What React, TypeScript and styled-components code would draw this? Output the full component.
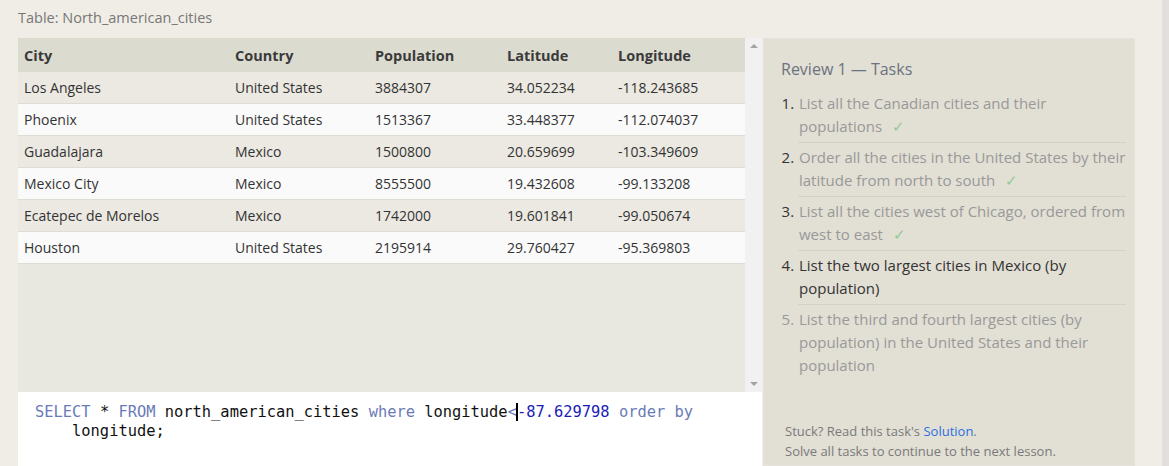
import styled, { createGlobalStyle } from 'styled-components';

const GlobalStyle = createGlobalStyle`
  html, body {
    margin: 0;
    padding: 0;
    background: #f0ede6;
    overflow: hidden;
  }
  body {
    font-family: "Open Sans", "Noto Sans", sans-serif;
  }
`;

const Screen = styled.div`
  display: flex;
  height: 466px;
  overflow: hidden;
`;
const Content = styled.div`
  flex: 1;
  display: flex;
  flex-direction: column;
  padding-left: 18px;
`;
const PageScroll = styled.div`
  width: 7px;
  background: #e3dfdc;
`;
const TableTitle = styled.div`
  height: 38px;
  line-height: 36px;
  font-size: 14.5px;
  color: #777;
`;
const Workspace = styled.div`
  flex: 1;
  display: flex;
  gap: 1px;
  min-height: 0;
`;
const LeftColumn = styled.div`
  width: 744px;
  display: flex;
  flex-direction: column;
`;
const TableArea = styled.div`
  height: 354px;
  display: flex;
  background: #e9e8e0;
`;
const TableWrap = styled.div`
  flex: 1;
`;
const Table = styled.table`
  width: 100%;
  border-collapse: collapse;
  table-layout: fixed;
  font-size: 14px;
  color: #333;
`;
const HeadCell = styled.th<{ $w: number }>`
  width: ${(p) => p.$w - 12}px;
  height: 34px;
  padding: 0 6px;
  text-align: left;
  font-weight: 700;
  font-size: 14.5px;
  color: #3a3a3a;
  background: #dcdbd0;
`;
const Row = styled.tr<{ $odd: boolean }>`
  background: ${(p) => (p.$odd ? '#ebe9e2' : '#fafafa')};
  border-bottom: 1px solid #dedcd4;
`;
const Cell = styled.td`
  height: 31px;
  padding: 0 6px;
  white-space: nowrap;
`;
const FakeScrollbar = styled.div`
  width: 17px;
  background: #f1f1f1;
  display: flex;
  flex-direction: column;
  justify-content: space-between;
  align-items: center;
  padding: 6px 0;
  box-sizing: border-box;
`;
const Arrow = styled.div<{ $up?: boolean }>`
  width: 0;
  height: 0;
  border-left: 4px solid transparent;
  border-right: 4px solid transparent;
  ${(p) =>
    p.$up ? 'border-bottom: 4px solid #a3a3a3;' : 'border-top: 4px solid #a3a3a3;'}
`;
const Editor = styled.div`
  flex: 1;
  background: #fff;
  padding: 11px 17px 0;
  font-family: "DejaVu Sans Mono", "Liberation Mono", monospace;
  font-size: 15.4px;
  line-height: 19px;
  color: #111;
  white-space: pre;
`;
const CodeLine = styled.div<{ $indent?: boolean }>`
  padding-left: ${(p) => (p.$indent ? '4ch' : '0')};
`;
const Kw = styled.span`
  color: #6a7bb8;
`;
const Num = styled.span`
  color: #1c1cb8;
`;
const Caret = styled.span`
  display: inline-block;
  width: 2px;
  height: 18px;
  margin: 0 -1px;
  vertical-align: -4px;
  background: #000;
`;

const TaskPanel = styled.div`
  width: 372px;
  background: #e2dfd4;
  border: 1px solid #e6e4da;
  box-sizing: border-box;
  display: flex;
  flex-direction: column;
  padding: 18px 4px 4px 17px;
`;
const PanelTitle = styled.div`
  font-size: 16px;
  line-height: 24px;
  color: #6c7280;
`;
const TaskList = styled.ol`
  margin: 8px 0 0;
  padding-left: 17px;
  font-size: 15px;
  line-height: 23px;
`;
type TaskState = 'done' | 'current' | 'todo';
const Task = styled.li<{ $state: TaskState }>`
  padding: 3px 0 4px 1px;
  margin-right: 4px;
  border-bottom: 1px solid ${(p) => (p.$state === 'todo' ? 'transparent' : '#d4d1c5')};
  color: ${(p) => (p.$state === 'current' ? '#333' : '#999')};
  &::marker {
    color: ${(p) => (p.$state === 'todo' ? '#999' : '#333')};
  }
`;
const Check = styled.span`
  color: #93c993;
  margin-left: 10px;
`;
const Footer = styled.div`
  margin-top: auto;
  padding-left: 4px;
  font-size: 13px;
  line-height: 20px;
  color: #7a7a7a;
`;
const SolutionLink = styled.a`
  color: #2a6fe0;
  text-decoration: none;
`;

const columns = [
  { name: 'City', w: 211 },
  { name: 'Country', w: 140 },
  { name: 'Population', w: 132 },
  { name: 'Latitude', w: 111 },
  { name: 'Longitude', w: 133 },
];

const rows = [
  ['Los Angeles', 'United States', '3884307', '34.052234', '-118.243685'],
  ['Phoenix', 'United States', '1513367', '33.448377', '-112.074037'],
  ['Guadalajara', 'Mexico', '1500800', '20.659699', '-103.349609'],
  ['Mexico City', 'Mexico', '8555500', '19.432608', '-99.133208'],
  ['Ecatepec de Morelos', 'Mexico', '1742000', '19.601841', '-99.050674'],
  ['Houston', 'United States', '2195914', '29.760427', '-95.369803'],
];

const tasks: { text: string; state: TaskState }[] = [
  { text: 'List all the Canadian cities and their populations', state: 'done' },
  { text: 'Order all the cities in the United States by their latitude from north to south', state: 'done' },
  { text: 'List all the cities west of Chicago, ordered from west to east', state: 'done' },
  { text: 'List the two largest cities in Mexico (by population)', state: 'current' },
  { text: 'List the third and fourth largest cities (by population) in the United States and their population', state: 'todo' },
];

const App = () => {
  return (
    <>
      <GlobalStyle />
      <Screen>
        <Content>
          <TableTitle>Table: North_american_cities</TableTitle>
          <Workspace>
            <LeftColumn>
              <TableArea>
                <TableWrap>
                  <Table>
                    <thead>
                      <tr>
                        {columns.map((c) => (
                          <HeadCell key={c.name} $w={c.w}>
                            {c.name}
                          </HeadCell>
                        ))}
                      </tr>
                    </thead>
                    <tbody>
                      {rows.map((r, i) => (
                        <Row key={r[0]} $odd={i % 2 === 0}>
                          {r.map((v, j) => (
                            <Cell key={j}>{v}</Cell>
                          ))}
                        </Row>
                      ))}
                    </tbody>
                  </Table>
                </TableWrap>
                <FakeScrollbar>
                  <Arrow $up />
                  <Arrow />
                </FakeScrollbar>
              </TableArea>
              <Editor>
                <CodeLine>
                  <Kw>SELECT</Kw> * <Kw>FROM</Kw> north_american_cities <Kw>where</Kw> longitude
                  <Kw>&lt;</Kw>
                  <Caret />
                  <Num>-87.629798</Num> <Kw>order by</Kw>
                </CodeLine>
                <CodeLine $indent>longitude;</CodeLine>
              </Editor>
            </LeftColumn>
            <TaskPanel>
              <PanelTitle>Review 1 — Tasks</PanelTitle>
              <TaskList>
                {tasks.map((t) => (
                  <Task key={t.text} $state={t.state}>
                    {t.text}
                    {t.state === 'done' && <Check>✓</Check>}
                  </Task>
                ))}
              </TaskList>
              <Footer>
                <div>
                  Stuck? Read this task's <SolutionLink href="#">Solution</SolutionLink>.
                </div>
                <div>Solve all tasks to continue to the next lesson.</div>
              </Footer>
            </TaskPanel>
          </Workspace>
        </Content>
        <PageScroll />
      </Screen>
    </>
  );
};

export default App;
